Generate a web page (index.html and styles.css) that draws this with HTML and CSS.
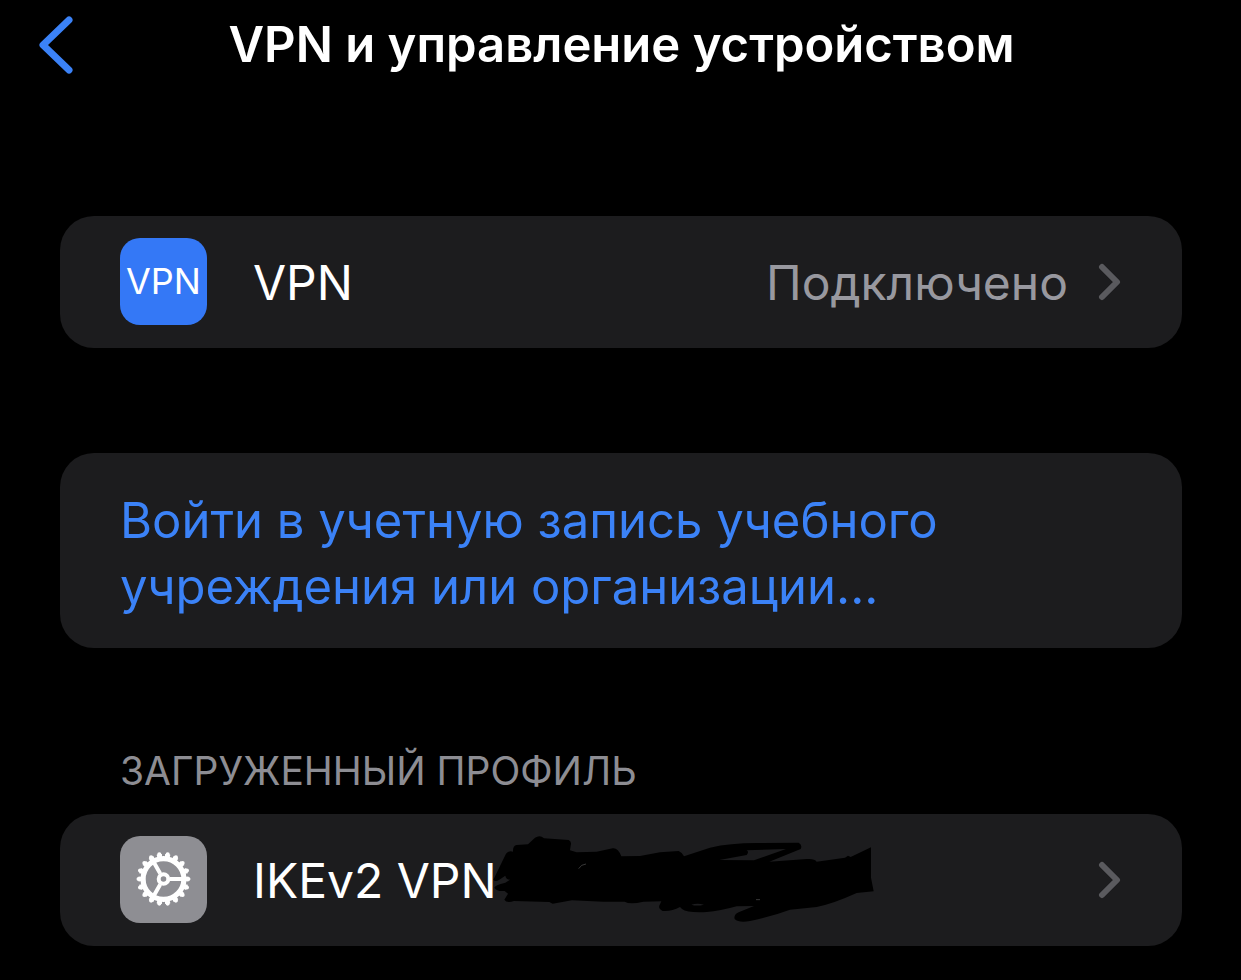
FILE: index.html
```html
<!DOCTYPE html>
<html lang="ru">
<head>
    <meta charset="UTF-8">
    <meta name="viewport" content="width=device-width, initial-scale=1.0">
    <title>VPN и управление устройством</title>
    <link rel="stylesheet" href="styles.css">
</head>
<body>

<header class="navbar">
    <button class="back" type="button" aria-label="Назад">
        <svg width="34" height="58" viewBox="0 0 34 58"><path d="M30 4L4 29L30 54"/></svg>
    </button>
    <h1>VPN и управление устройством</h1>
</header>

<main>
    <section class="group">
        <a class="row" href="#vpn">
            <span class="icon icon-vpn">VPN</span>
            <span class="name">VPN</span>
            <span class="value">Подключено</span>
            <svg class="chevron" width="24" height="40" viewBox="0 0 24 40"><path d="M4 5L19 20L4 35"/></svg>
        </a>
    </section>

    <section class="group">
        <a class="signin" href="#signin">Войти в учетную запись учебного учреждения или организации...</a>
    </section>

    <section class="profile">
        <h2>Загруженный профиль</h2>
        <div class="group">
            <a class="row" href="#profile">
                <span class="icon icon-gear">
                    <svg width="87" height="87" viewBox="0 0 87 87">
                        <circle cx="43.5" cy="43" r="20.4" stroke-width="5.2"/>
                        <circle cx="43.5" cy="43" r="23.6" stroke-width="3" pathLength="18" stroke-dasharray="0.62 0.38" stroke-dashoffset="0.31"/>
                        <circle cx="43.5" cy="43" r="24.9" stroke-width="4.2" stroke-linecap="round" pathLength="18" stroke-dasharray="0 1"/>
                        <circle cx="43.5" cy="43" r="4.8" stroke-width="4"/>
                        <path d="M50 43H63M40.2 37.4L33.5 25.7M40.2 48.6L33.5 60.3" stroke-width="4"/>
                    </svg>
                </span>
                <span class="name">IKEv2 VPN</span>
                <svg class="scribble" width="381" height="87" viewBox="39 45 1143 261">
                    <path d="M40 176L78 98Q88 88 99 92Q98 74 110 72L144 70L165 50Q180 40 192 52L266 57Q276 62 272 74L270 88L290 94L350 92L398 82Q414 80 424 106L480 105L540 94L596 90Q606 94 612 106L690 80Q750 66 830 66L956 65Q968 72 962 84L868 122L980 114Q1004 112 1010 122L1095 110L1104 104L1112 108L1173 79V170L1181 211L1130 216Q1060 248 1010 258L930 266Q870 288 810 300Q776 306 764 294Q760 282 776 274L822 255L770 256Q720 270 680 273Q622 276 606 264L600 258Q575 272 548 270Q532 262 540 250L544 241L490 242Q450 252 434 242L370 242L276 238L218 248L208 243L102 240Q80 248 73 236L84 218L74 210Q50 212 43 200Q44 192 76 185L90 176Q78 176 76 164L58 176Q46 184 40 176Z"/>
                    <path class="gap" d="M718 117L800 102Q808 92 800 88L918 84L822 118ZM634 251Q652 245 672 251Q650 256 634 251Z"/>
                    <path class="glint" d="M296 143L305 133L318 129M828 236H840"/>
                </svg>
                <svg class="chevron" width="24" height="40" viewBox="0 0 24 40"><path d="M4 5L19 20L4 35"/></svg>
            </a>
        </div>
    </section>
</main>

</body>
</html>
```
FILE: styles.css
```css
* {
    box-sizing: border-box;
}

body {
    margin: 0;
    background-color: #000;
    color: #fff;
    font-family: Inter, Roboto, sans-serif;
    font-size: 49px;
    line-height: 66px;
}

a {
    color: inherit;
    text-decoration: none;
}

svg {
    display: block;
    flex-shrink: 0;
}

.navbar {
    display: grid;
    grid-template-columns: 60px 1fr 60px;
    align-items: center;
    padding: 12px 37px 12px 39px;
}

.back {
    padding: 0;
    border: none;
    background: none;
    cursor: pointer;
}

.back path {
    fill: none;
    stroke: #3b82f7;
    stroke-width: 7;
    stroke-linecap: round;
    stroke-linejoin: round;
}

h1 {
    margin: 0;
    font-size: 49px;
    font-weight: 600;
    text-align: center;
}

main {
    padding: 126px 59px 34px 60px;
}

.group {
    margin-bottom: 105px;
    border-radius: 34px;
    background-color: #1c1c1e;
}

.row {
    display: flex;
    align-items: center;
    padding: 22px 60px 23px;
    font-size: 48px;
}

.icon {
    flex-shrink: 0;
    width: 87px;
    height: 87px;
    margin-right: 46px;
    border-radius: 20px;
    text-align: center;
}

.icon-vpn {
    background-color: #3478f6;
    font-size: 36px;
    line-height: 86px;
}

.icon-gear {
    background-color: #8e8e93;
}

.icon-gear svg {
    fill: none;
    stroke: #fff;
}

.name,
.value {
    padding-top: 2px;
}

.value {
    margin-left: auto;
    margin-right: 30px;
    color: #98989f;
}

.chevron {
    fill: none;
    stroke: #5a5a5e;
    stroke-width: 6;
    stroke-linecap: round;
    stroke-linejoin: round;
}

.scribble {
    margin-right: auto;
    margin-left: -4px;
}

.scribble .gap {
    fill: #1c1c1e;
}

.scribble .glint {
    fill: none;
    stroke: #555;
    stroke-width: 2;
}

.signin {
    display: block;
    padding: 35px 60px 28px;
    color: #3b82f7;
}

.profile {
    margin-top: -15px;
}

.profile h2 {
    margin: 0;
    padding: 0 60px 10px;
    color: #8d8d93;
    font-size: 39px;
    font-weight: 400;
    text-transform: uppercase;
}

.profile .group {
    margin-bottom: 0;
}
```
